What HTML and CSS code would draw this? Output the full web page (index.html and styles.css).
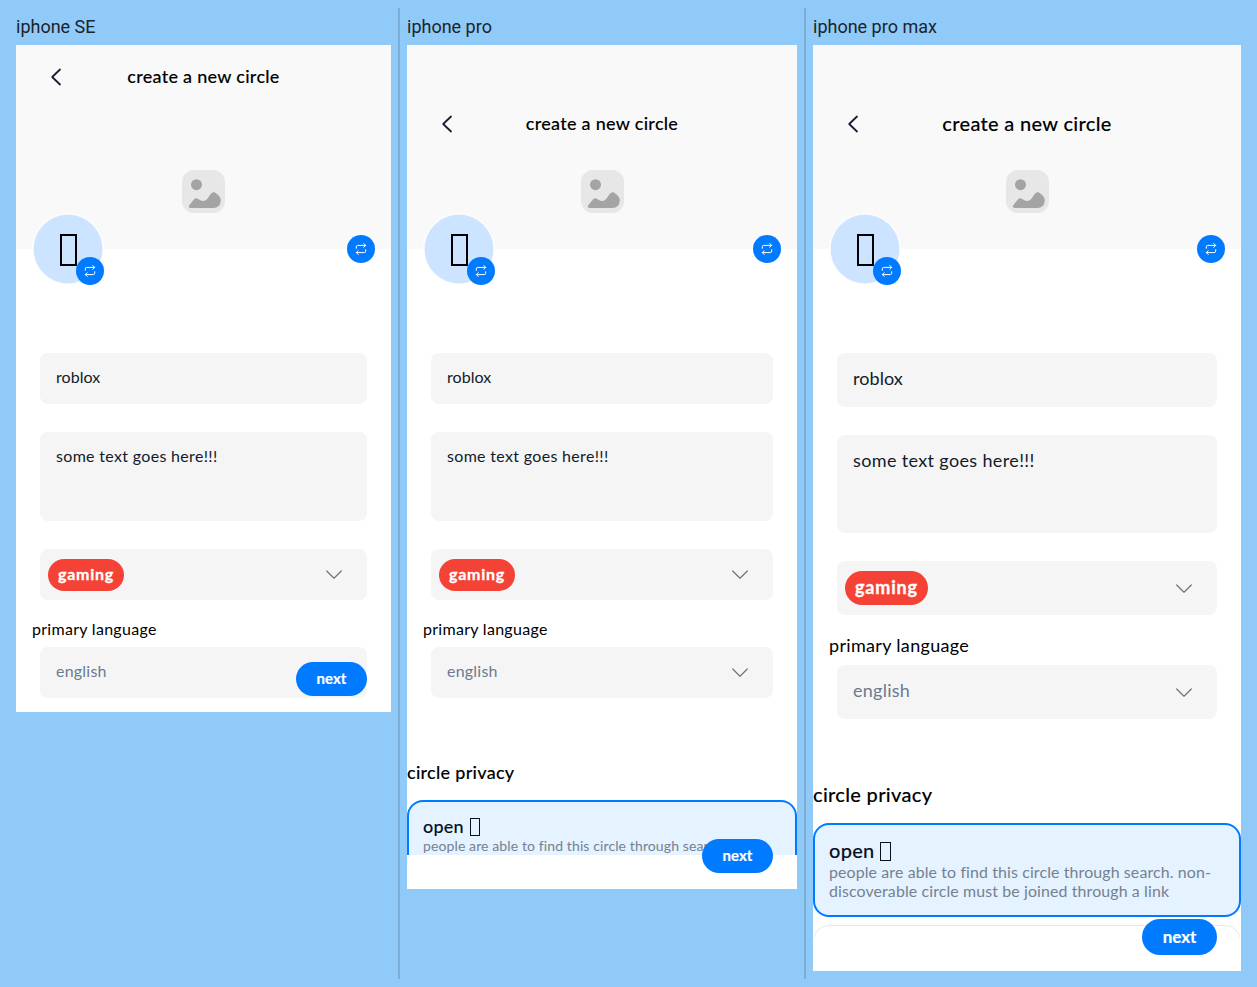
FILE: index.html
```html
<!DOCTYPE html>
<html lang="en">
<head>
<meta charset="utf-8">
<title>create a new circle</title>
<link rel="stylesheet" href="styles.css">
</head>
<body>
<svg class="defs" width="0" height="0">
  <symbol id="back" viewBox="0 0 12 18"><path d="M10 1.5 2.2 9 10 16.5" fill="none" stroke="currentColor" stroke-width="1.8" stroke-linecap="round" stroke-linejoin="round"/></symbol>
  <symbol id="down" viewBox="0 0 18 10"><path d="M1.7 1 9 8.2 16.3 1" fill="none" stroke="currentColor" stroke-width="1.2" stroke-linecap="round" stroke-linejoin="round"/></symbol>
  <symbol id="swap" viewBox="0 0 12 12"><path d="M1.3 5.3V3.9Q1.3 2.4 2.8 2.4H10.6M8.8.5 10.7 2.4 8.8 4.3M10.7 6.7V8.1Q10.7 9.6 9.2 9.6H1.4M3.2 7.7 1.3 9.6 3.2 11.5" fill="none" stroke="currentColor" stroke-width="1" stroke-linecap="round" stroke-linejoin="round"/></symbol>
  <symbol id="picture" viewBox="0 0 43 43"><rect width="43" height="43" rx="12" fill="#e7e7e7"/><circle cx="14.5" cy="14.7" r="5.5" fill="#a4a4a4"/><path d="M7.3 35.2 11.8 29.6Q14 27.2 16.6 29.2 21.6 33 25.6 28.4L28.6 24Q31.3 20.6 34.6 23.7 38.8 26.8 38.8 30.2 38.6 37.6 31.2 38H9Q5.6 37.6 7.3 35.2Z" fill="#a4a4a4"/></symbol>
</svg>
<main class="board">
  <section class="device se">
    <h2 class="device-name">iphone SE</h2>
    <div class="phone">
      <div class="screen">
        <header class="cover">
          <nav class="nav"><svg class="back"><use href="#back"/></svg><h1 class="title">create a new circle</h1></nav>
          <svg class="picture"><use href="#picture"/></svg>
          <div class="avatar"><i class="glyph"></i><span class="swap"><svg><use href="#swap"/></svg></span></div>
          <span class="swap cover-swap"><svg><use href="#swap"/></svg></span>
        </header>
        <form class="form">
          <div class="field">roblox</div>
          <div class="field area">some text goes here!!!</div>
          <div class="field select"><span class="tag">gaming</span><svg class="down"><use href="#down"/></svg></div>
          <div class="label">primary language</div>
          <div class="field select language"><span>english</span></div>
        </form>
      </div>
      <span class="next">next</span>
    </div>
  </section>
  <div class="divider"></div>
  <section class="device pro">
    <h2 class="device-name">iphone pro</h2>
    <div class="phone">
      <div class="screen">
        <header class="cover">
          <nav class="nav"><svg class="back"><use href="#back"/></svg><h1 class="title">create a new circle</h1></nav>
          <svg class="picture"><use href="#picture"/></svg>
          <div class="avatar"><i class="glyph"></i><span class="swap"><svg><use href="#swap"/></svg></span></div>
          <span class="swap cover-swap"><svg><use href="#swap"/></svg></span>
        </header>
        <form class="form">
          <div class="field">roblox</div>
          <div class="field area">some text goes here!!!</div>
          <div class="field select"><span class="tag">gaming</span><svg class="down"><use href="#down"/></svg></div>
          <div class="label">primary language</div>
          <div class="field select language"><span>english</span><svg class="down"><use href="#down"/></svg></div>
        </form>
        <h3 class="privacy">circle privacy</h3>
        <div class="card selected">
          <div class="card-title">open <i class="glyph"></i></div>
          <p class="card-text">people are able to find this circle through search. non-discoverable circle must be joined through a link</p>
        </div>
      </div>
      <span class="next">next</span>
    </div>
  </section>
  <div class="divider"></div>
  <section class="device max">
    <h2 class="device-name">iphone pro max</h2>
    <div class="phone">
      <div class="screen">
        <header class="cover">
          <nav class="nav"><svg class="back"><use href="#back"/></svg><h1 class="title">create a new circle</h1></nav>
          <svg class="picture"><use href="#picture"/></svg>
          <div class="avatar"><i class="glyph"></i><span class="swap"><svg><use href="#swap"/></svg></span></div>
          <span class="swap cover-swap"><svg><use href="#swap"/></svg></span>
        </header>
        <form class="form">
          <div class="field">roblox</div>
          <div class="field area">some text goes here!!!</div>
          <div class="field select"><span class="tag">gaming</span><svg class="down"><use href="#down"/></svg></div>
          <div class="label">primary language</div>
          <div class="field select language"><span>english</span><svg class="down"><use href="#down"/></svg></div>
        </form>
        <h3 class="privacy">circle privacy</h3>
        <div class="card selected">
          <div class="card-title">open <i class="glyph"></i></div>
          <p class="card-text">people are able to find this circle through search. non-discoverable circle must be joined through a link</p>
        </div>
        <div class="card"></div>
      </div>
      <span class="next">next</span>
    </div>
  </section>
</main>
</body>
</html>
```
FILE: styles.css
```css
* { box-sizing: border-box; }
body { margin: 0; height: 987px; background: #90caf9; font-family: Lato, "Open Sans", sans-serif; color: #000; overflow: hidden; }
h1, h2, h3, p { margin: 0; font-weight: 500; }
svg { display: block; flex: none; }
.defs { position: absolute; }
.board { display: flex; gap: 7px; height: 979px; padding: 8px 0 0 16px; }
.divider { flex: none; width: 2px; background: #7badd5; }
.device { flex: none; }
.device-name { height: 37px; font: 400 18px/38px Roboto, sans-serif; color: #1d2329; white-space: nowrap; }

.se { --w: 375px; --h: 667px; --safe: 0px; --nav-top: 16px; }
.pro { --w: 390px; --h: 844px; --safe: 34px; --nav-top: 63px; }
.max { --w: 428px; --h: 926px; --safe: 34px; --nav-top: 63px; }
.se, .pro { --title: 18px; --body: 16px; --small: 14px; --next: 15px; --field: 51px; --area: 89px; --tag: 32px; --pad: 14px; }
.max { --title: 20px; --body: 18px; --small: 15.9px; --next: 17px; --field: 54px; --area: 98px; --tag: 34px; --pad: 15px; }

.phone { position: relative; width: var(--w); height: var(--h); background: #fff; overflow: hidden; }
.screen { height: calc(var(--h) - var(--safe)); overflow: hidden; }
.cover { position: relative; display: flex; flex-direction: column; height: 204px; padding: var(--nav-top) 24px 36px; background: #f9f9f9; }
.nav { display: grid; grid-template-columns: 32px 1fr 32px; align-items: center; height: 32px; }
.back { width: 12px; height: 18px; margin-left: 10px; color: #1c1c33; }
.title { height: 32px; font-size: var(--title); line-height: 30px; letter-spacing: .016em; text-align: center; white-space: nowrap; -webkit-text-stroke: .1px; }
.picture { width: 43px; height: 43px; margin: auto auto 0; }
.avatar { position: absolute; left: 16px; bottom: -36px; width: 72px; height: 72px; border: 1px solid #fff; border-radius: 50%; background: #cce4ff; background-clip: padding-box; box-shadow: inset 0 0 0 .6px #fff; display: flex; align-items: center; justify-content: center; }
.avatar .glyph { width: 17px; height: 32px; border: 2px solid #000; margin-top: 2px; }
.swap { position: absolute; right: -1px; bottom: -1px; display: flex; align-items: center; justify-content: center; width: 28px; height: 28px; border-radius: 50%; background: #007aff; color: #fff; }
.swap svg { width: 12px; height: 12px; }
.cover-swap { right: 16px; bottom: -14px; }

.form { padding: 104px 24px 0; }
.field { height: var(--field); padding: var(--pad) 16px; border-radius: 8px; background: #f5f5f5; font-size: var(--body); line-height: 20px; letter-spacing: .003em; color: #111b2b; }
.area { height: var(--area); margin: 28px 0; letter-spacing: .02em; }
.select { display: flex; align-items: center; justify-content: space-between; padding: 0 24px 0 8px; }
.tag { height: var(--tag); line-height: calc(var(--tag) - 2px); padding: 0 10px; border-radius: 17px; background: #f44336; color: #fff; font-weight: 700; letter-spacing: .045em; -webkit-text-stroke: .3px; }
.down { width: 18px; height: 10px; color: #707378; }
.max .down { margin-top: 1px; }
.label { margin: 19px 0 8px -8px; font-size: var(--body); line-height: 20px; letter-spacing: .018em; }
.max .label { margin: 20px 0 10px -8px; }
.language { padding-left: 16px; color: #6b7a90; letter-spacing: .014em; }
.language span { margin-top: -4px; }
.privacy { margin-top: 63px; font-size: var(--title); line-height: 22px; letter-spacing: .016em; -webkit-text-stroke: .1px; }
.max .privacy { margin-top: 64px; }
.card { height: 94px; margin-top: 8px; padding: 14px; border: 1px solid #e8e8e8; border-radius: 16px; }
.selected { margin-top: 17px; padding: 13px 14px; border: 2px solid #007aff; background: #e5f2ff; }
.max .selected { margin-top: 18px; }
.card-title { display: flex; align-items: center; gap: 6px; height: 22px; font-size: var(--title); line-height: 22px; letter-spacing: .013em; color: #05111f; font-weight: 500; -webkit-text-stroke: .1px; }
.max .card-title { height: 24px; line-height: 24px; }
.card-title .glyph { width: 10px; height: 18px; margin-top: 2px; border: 1px solid currentColor; }
.max .card-title .glyph { width: 11px; height: 19px; }
.card-text { font-size: var(--small); font-weight: 400; line-height: 19px; letter-spacing: .008em; color: #74818f; }
.pro .card-text { margin-top: -1px; }
.next { position: absolute; right: 24px; bottom: 16px; width: 71px; height: 34px; line-height: 33px; text-align: center; border-radius: 18px; background: #007aff; color: #fff; font-size: var(--next); font-weight: 700; -webkit-text-stroke: .2px; }
.max .next { width: 75px; height: 36px; line-height: 35px; }
```
